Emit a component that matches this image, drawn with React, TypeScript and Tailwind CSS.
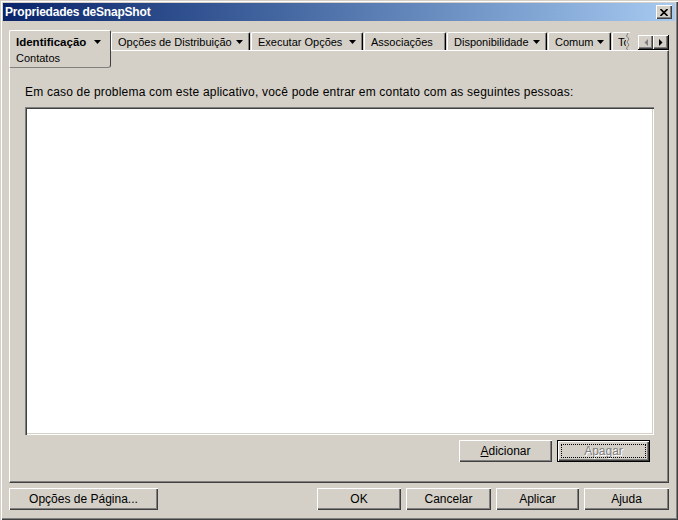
import type { ReactNode } from "react"

const raised =
  "shadow-[inset_1px_1px_0_#ffffff,inset_-1px_-1px_0_#404040,inset_-2px_-2px_0_#808080]"

function Arrow({ className = "" }: { className?: string }) {
  return (
    <svg width="7" height="4" viewBox="0 0 7 4" className={`shrink-0 ${className}`}>
      <polygon points="0,0 7,0 3.5,4" fill="#000" />
    </svg>
  )
}

function Tab({ width, label, arrow = true }: { width: number; label: string; arrow?: boolean }) {
  return (
    <div
      style={{ width }}
      className="shrink-0 mt-[2px] h-[18px] flex items-center justify-between pl-[6px] pr-[6px] border-l border-t border-white border-r border-r-[#000000] rounded-tl-[2px] rounded-tr-[2px] shadow-[inset_-1px_0_0_#808080] whitespace-nowrap"
    >
      <span>{label}</span>
      {arrow && <Arrow />}
    </div>
  )
}

function Button({
  width,
  children,
  disabled,
  isDefault,
}: {
  width: number
  children: ReactNode
  disabled?: boolean
  isDefault?: boolean
}) {
  if (isDefault) {
    return (
      <div style={{ width }} className="h-[22px] border border-black">
        <div className={`relative h-full flex items-center justify-center ${raised}`}>
          <div className="absolute inset-[3px] border border-dotted border-black" />
          <span className={disabled ? "text-[#808080] [text-shadow:1px_1px_0_#ffffff]" : ""}>{children}</span>
        </div>
      </div>
    )
  }
  return (
    <div style={{ width }} className={`h-[22px] flex items-center justify-center ${raised}`}>
      <span className={disabled ? "text-[#808080] [text-shadow:1px_1px_0_#ffffff]" : ""}>{children}</span>
    </div>
  )
}

export default function App() {
  return (
    <div className="w-[678px] h-[520px] bg-[#d4d0c8] p-[3px] text-[12px] leading-[14px] text-black font-['Liberation_Sans',Arial,sans-serif] shadow-[inset_1px_1px_0_#d4d0c8,inset_2px_2px_0_#ffffff,inset_-1px_-1px_0_#404040,inset_-2px_-2px_0_#808080] overflow-hidden">
      {/* title bar */}
      <div className="h-[18px] flex items-center justify-between pl-[2px] pr-[3px] bg-gradient-to-r from-[#0a246a] to-[#a6caf0]">
        <span className="font-bold text-white tracking-[-0.2px]">Propriedades deSnapShot</span>
        <div className={`w-[16px] h-[14px] bg-[#d4d0c8] flex items-center justify-center ${raised}`}>
          <svg width="8" height="7" viewBox="0 0 8 7">
            <path d="M0.5 0 L7.5 7 M7.5 0 L0.5 7" stroke="#000" strokeWidth="1.6" />
          </svg>
        </div>
      </div>

      <div className="pl-[6px] pt-[9px]">
        {/* tab strip */}
        <div className="w-[660px] h-[20px] flex items-start text-[11px]">
          <div className="shrink-0 relative z-10 w-[102px] h-[38px] bg-[#d4d0c8] border-l border-t border-white border-r border-b border-r-[#404040] border-b-[#808080] rounded-tl-[2px] rounded-tr-[2px] rounded-br-[3px] pl-[6px] pr-[9px] pt-[4px]">
            <div className="flex items-center justify-between">
              <span className="font-bold text-[11.5px]">Identificação</span>
              <Arrow />
            </div>
            <div className="mt-[2px]">Contatos</div>
          </div>
          <Tab width={139} label="Opções de Distribuição" />
          <div className="w-[1px] shrink-0" />
          <Tab width={112} label="Executar Opções" />
          <div className="w-[1px] shrink-0" />
          <Tab width={82} label="Associações" arrow={false} />
          <div className="w-[1px] shrink-0" />
          <Tab width={100} label="Disponibilidade" />
          <div className="w-[1px] shrink-0" />
          <Tab width={63} label="Comum" />
          <div className="w-[1px] shrink-0" />
          <div className="shrink-0 mt-[2px] w-[18px] h-[18px] relative overflow-hidden border-l border-t border-white rounded-tl-[2px] pl-[5px] flex items-center">
            <span>To</span>
            <svg width="4" height="18" viewBox="0 0 4 18" className="absolute right-0 top-0 bg-[#d4d0c8]">
              <path d="M2 0 L0.5 3 L3 6 L1 9 L3 12 L0.5 15 L2 18" stroke="#808080" fill="none" strokeWidth="1" />
            </svg>
          </div>
          <div className="ml-auto mt-[5px] w-[31px] h-[15px] flex border-r border-b border-black">
            <div className={`w-[15px] h-full flex items-center justify-center ${raised}`}>
              <svg width="4" height="7" viewBox="0 0 4 7">
                <polygon points="4,0 4,7 0.5,3.5" fill="#808080" />
              </svg>
            </div>
            <div className={`w-[15px] h-full flex items-center justify-center ${raised}`}>
              <svg width="4" height="7" viewBox="0 0 4 7">
                <polygon points="0,0 0,7 3.5,3.5" fill="#000" />
              </svg>
            </div>
          </div>
        </div>

        {/* panel */}
        <div className="w-[660px] h-[433px] border-l border-t border-white border-r border-b border-r-[#404040] border-b-[#404040] shadow-[inset_-1px_-1px_0_#808080] pl-[15px] pr-[14px] pt-[34px]">
          <div className="mb-[8px] whitespace-nowrap tracking-[0.2px]">
            Em caso de problema com este aplicativo, você pode entrar em contato com as seguintes pessoas:
          </div>
          <div className="h-[328px] bg-white shadow-[inset_1px_1px_0_#808080,inset_2px_2px_0_#404040,inset_-1px_-1px_0_#ffffff,inset_-2px_-2px_0_#d4d0c8]" />
          <div className="mt-[5px] mr-[4px] flex justify-end gap-[5px]">
            <Button width={93}>
              <u>A</u>dicionar
            </Button>
            <Button width={93} disabled isDefault>
              Apagar
            </Button>
          </div>
        </div>

        {/* bottom buttons */}
        <div className="w-[660px] mt-[5px] flex">
          <Button width={149}>
            Opções de Pá<u>g</u>ina...
          </Button>
          <div className="ml-auto flex gap-[5px]">
            <Button width={84}>OK</Button>
            <Button width={85}>Cancelar</Button>
            <Button width={83}>Aplicar</Button>
            <Button width={85}>
              A<u>j</u>uda
            </Button>
          </div>
        </div>
      </div>
    </div>
  )
}
